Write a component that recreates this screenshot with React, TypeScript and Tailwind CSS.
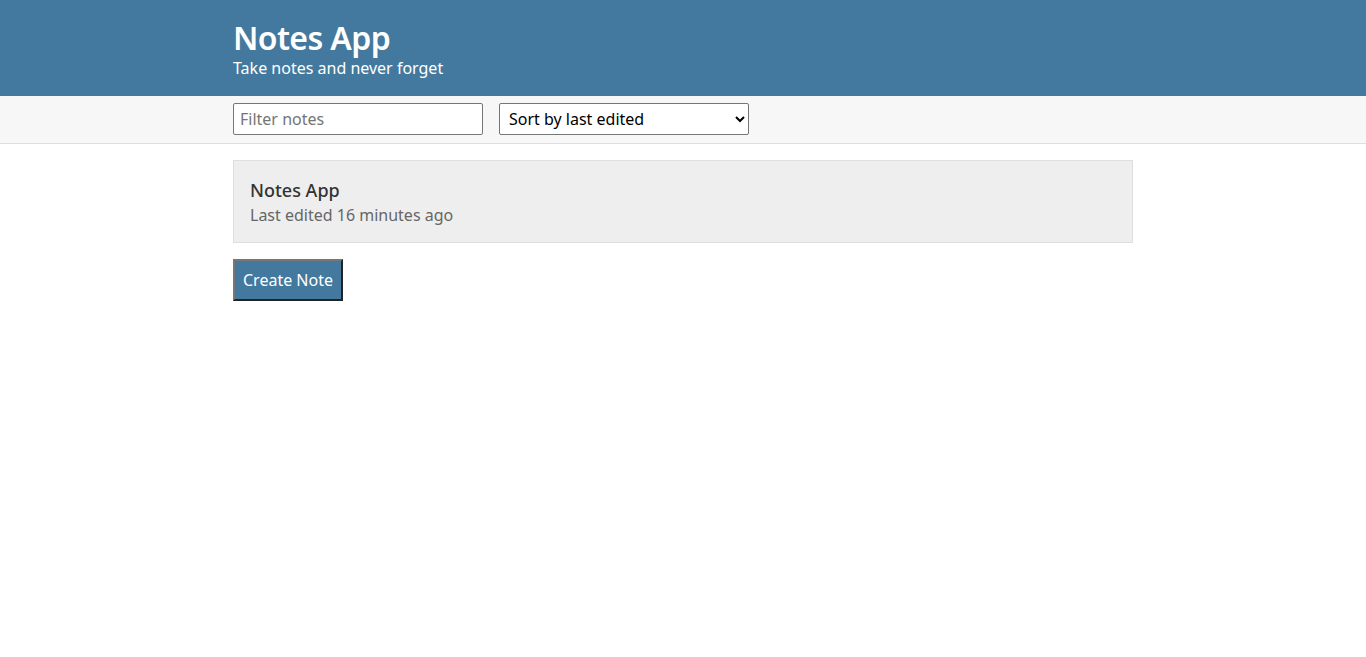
import React, { useState } from "react";

const font = { fontFamily: '"Noto Sans", "Open Sans", sans-serif' };

export default function App() {
  const [filter, setFilter] = useState("");
  const [sortBy, setSortBy] = useState("byEdited");

  return (
    <div className="min-h-screen bg-white text-[#333]" style={font}>
      {/* Header */}
      <header className="bg-[#43799e] text-white">
        <div className="mx-auto w-[900px] pt-[19px] pb-[17px]">
          <h1 className="text-[32px] leading-[38px] font-semibold tracking-[-0.6px]">Notes App</h1>
          <h2 className="text-[16px] leading-[22px] font-normal">Take notes and never forget</h2>
        </div>
      </header>

      {/* Toolbar */}
      <div className="border-b border-[#dedede] bg-[#f7f7f7]">
        <div className="mx-auto flex w-[900px] gap-4 pt-[7px] pb-2">
          <input
            type="text"
            placeholder="Filter notes"
            value={filter}
            onChange={(e) => setFilter(e.target.value)}
            className="h-8 w-[250px] rounded-[2px] border border-[#767676] bg-white px-[6px] text-base text-black placeholder:text-[#757575]"
          />
          <select
            value={sortBy}
            onChange={(e) => setSortBy(e.target.value)}
            className="h-8 w-[250px] rounded-[2px] border border-[#767676] bg-white px-[5px] text-base text-black"
          >
            <option value="byEdited">Sort by last edited</option>
            <option value="byCreated">Sort by recently created</option>
            <option value="alphabetical">Sort alphabetically</option>
          </select>
        </div>
      </div>

      {/* Notes */}
      <div className="mx-auto w-[900px] pt-4">
        <a href="#" className="block border border-[#dedede] bg-[#eeeeee] px-4 pt-[17px] pb-[14px]">
          <p className="text-[18px] leading-[24px] font-medium text-[#333]">Notes App</p>
          <p className="text-base leading-[26px] text-[#666]">Last edited 16 minutes ago</p>
        </a>
        <button
          type="button"
          className="mt-4 h-[42px] border-2 border-t-[#767676] border-l-[#767676] border-b-[#222] border-r-[#222] bg-[#43799e] px-2 text-base text-white"
        >
          Create Note
        </button>
      </div>
    </div>
  );
}
